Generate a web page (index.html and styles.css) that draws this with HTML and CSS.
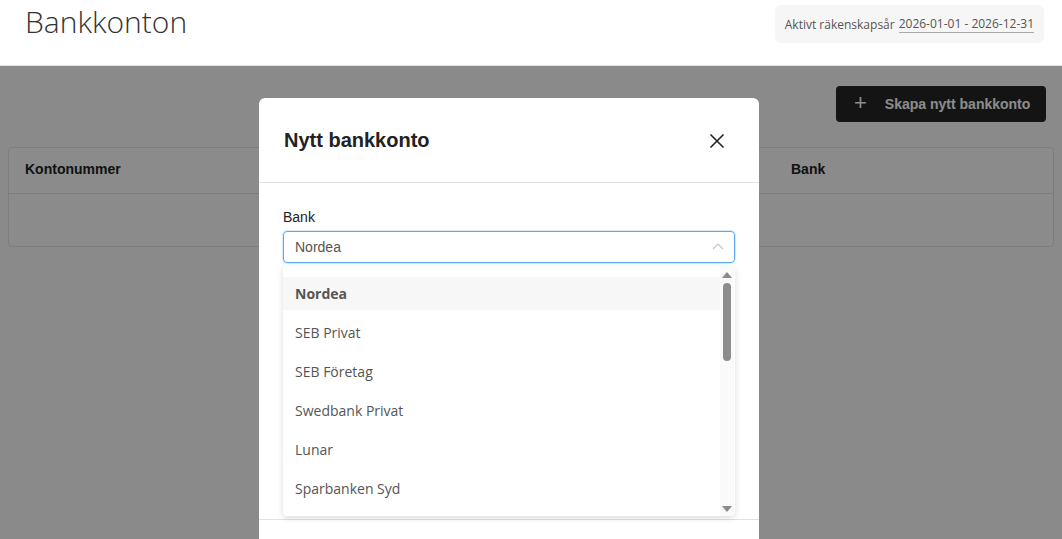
FILE: index.html
```html
<!DOCTYPE html>
<html lang="sv">
<head>
<meta charset="utf-8">
<title>Bankkonton</title>
<link rel="stylesheet" href="styles.css">
</head>
<body>
<header class="topbar">
  <h1 class="page-title">Bankkonton</h1>
  <div class="fiscal">Aktivt räkenskapsår <span class="fiscal-range">2026-01-01 - 2026-12-31</span></div>
</header>
<main class="content">
  <div class="actions">
    <button class="btn-create"><span class="plus">+</span><span class="btn-label">Skapa nytt bankkonto</span></button>
  </div>
  <div class="table-card">
    <div class="thead">
      <div class="th th-num">Kontonummer</div>
      <div class="th th-bank">Bank</div>
    </div>
    <div class="tbody"></div>
  </div>
</main>
<div class="backdrop"></div>
<div class="modal">
  <div class="modal-head">
    <h2 class="modal-title">Nytt bankkonto</h2>
    <svg class="close" width="16" height="16" viewBox="0 0 16 16"><path d="M1.5 1.5L14.5 14.5M14.5 1.5L1.5 14.5" stroke="#222" stroke-width="1.6" fill="none"/></svg>
  </div>
  <div class="modal-body">
    <label class="field-label">Bank</label>
    <div class="select">
      <span class="select-value">Nordea</span>
      <svg class="chevron" width="12" height="8" viewBox="0 0 12 8"><path d="M1 7L6 2L11 7" stroke="#c4c4c4" stroke-width="1.2" fill="none"/></svg>
    </div>
    <div class="dropdown">
      <ul class="options">
        <li class="option selected">Nordea</li>
        <li class="option">SEB Privat</li>
        <li class="option">SEB Företag</li>
        <li class="option">Swedbank Privat</li>
        <li class="option">Lunar</li>
        <li class="option">Sparbanken Syd</li>
      </ul>
      <div class="scrollbar">
        <svg class="arrow-up" width="10" height="6" viewBox="0 0 10 6"><path d="M0 6L5 0L10 6Z" fill="#8a8a8a"/></svg>
        <div class="thumb"></div>
        <svg class="arrow-down" width="10" height="6" viewBox="0 0 10 6"><path d="M0 0L5 6L10 0Z" fill="#8a8a8a"/></svg>
      </div>
    </div>
  </div>
  <div class="modal-foot"></div>
</div>
</body>
</html>
```
FILE: styles.css
```css
* { box-sizing: border-box; }
html, body { margin: 0; padding: 0; }
body {
  width: 1062px;
  height: 539px;
  overflow: hidden;
  background: #fbfbfb;
  font-family: "Open Sans", "Liberation Sans", sans-serif;
  position: relative;
}
.topbar {
  height: 66px;
  background: #fff;
  border-bottom: 1px solid #e2e2e2;
  display: flex;
  justify-content: space-between;
  align-items: flex-start;
  padding: 0 18px 0 25px;
  position: relative;
  z-index: 5;
}
.page-title {
  margin: 3px 0 0 0;
  font-family: "Open Sans", sans-serif;
  font-weight: 300;
  font-size: 30px;
  line-height: 38px;
  color: #333;
}
.fiscal {
  margin-top: 5px;
  background: #f6f6f6;
  border-radius: 6px;
  height: 38px;
  padding: 0 10px 0 10px;
  display: flex;
  align-items: center;
  gap: 4px;
  font-size: 12px;
  color: #555;
}
.fiscal-range {
  border-bottom: 1px solid #aaa;
  line-height: 16px;
}
.content {
  padding: 20px 8px 0 8px;
}
.actions {
  display: flex;
  justify-content: flex-end;
  padding-right: 8px;
}
.btn-create {
  height: 36px;
  width: 210px;
  background: #262626;
  color: #fff;
  border: none;
  border-radius: 4px;
  font-family: "Liberation Sans", Arial, sans-serif;
  font-weight: bold;
  font-size: 14px;
  display: flex;
  align-items: center;
  padding: 0 16px 0 18px;
  gap: 18px;
  white-space: nowrap;
}
.btn-create .plus {
  font-size: 22px;
  font-weight: normal;
  line-height: 1;
  margin-top: -3px;
}
.table-card {
  margin-top: 25px;
  background: #fdfdfd;
  border: 1px solid #e4e4e4;
  border-radius: 4px;
  height: 100px;
}
.thead {
  height: 46px;
  border-bottom: 1px solid #e4e4e4;
  display: flex;
  align-items: center;
  padding-bottom: 3px;
  font-family: "Liberation Sans", Arial, sans-serif;
  font-weight: bold;
  font-size: 14px;
  color: #222;
}
.th-num { padding-left: 16px; width: 782px; }
.tbody { height: 53px; }
.backdrop {
  position: absolute;
  left: 0; top: 66px; right: 0; bottom: 0;
  background: rgba(0,0,0,0.45);
  z-index: 6;
}
.modal {
  position: absolute;
  left: 259px;
  top: 98px;
  width: 500px;
  height: 460px;
  background: #fff;
  border-radius: 6px;
  z-index: 7;
  overflow: hidden;
}
.modal-head {
  height: 85px;
  border-bottom: 1px solid #e2e2e2;
  display: flex;
  align-items: center;
  justify-content: space-between;
  padding: 0 34px 0 25px;
}
.modal-title {
  margin: 0;
  font-family: "Liberation Sans", Arial, sans-serif;
  font-weight: bold;
  font-size: 20px;
  color: #222;
}
.close { margin-top: 1px; }
.modal-body {
  padding: 26px 24px 0 24px;
  height: 336px;
  position: relative;
}
.field-label {
  display: block;
  font-family: "Liberation Sans", Arial, sans-serif;
  font-size: 14px;
  color: #222;
  line-height: 16px;
  margin-bottom: 6px;
}
.select {
  height: 32px;
  border: 1px solid #5aa9f5;
  border-radius: 4px;
  box-shadow: 0 0 0 1px #d6eafc;
  display: flex;
  align-items: center;
  justify-content: space-between;
  padding: 0 10px 0 11px;
  font-family: "Liberation Sans", Arial, sans-serif;
  font-size: 14px;
  color: #555;
}
.chevron { margin-top: -2px; }
.dropdown {
  position: absolute;
  left: 24px;
  top: 83px;
  width: 452px;
  height: 250px;
  background: #fff;
  border-radius: 4px;
  box-shadow: 0 2px 6px rgba(0,0,0,0.14);
  display: flex;
  z-index: 2;
  overflow: hidden;
}
.options {
  list-style: none;
  margin: 0;
  padding: 11px 0 0 0;
  flex: 1;
  display: flex;
  flex-direction: column;
  gap: 6px;
}
.option {
  height: 33px;
  flex: none;
  display: flex;
  align-items: center;
  padding-left: 12px;
  font-size: 14px;
  color: #555;
}
.option.selected {
  background: #f7f7f7;
  font-weight: bold;
}
.scrollbar {
  width: 14px;
  background: #fafafa;
  display: flex;
  flex-direction: column;
  align-items: center;
  padding: 6px 0 4px 0;
  margin-right: 1px;
}
.arrow-up { flex: none; }
.thumb {
  width: 8px;
  height: 78px;
  background: #8d8d8d;
  border-radius: 4px;
  margin-top: 5px;
}
.arrow-down { margin-top: auto; }
.modal-foot {
  border-top: 1px solid #e2e2e2;
}
```
